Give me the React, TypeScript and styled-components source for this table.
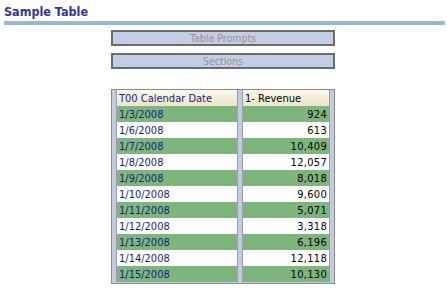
import React from "react";
import styled, { createGlobalStyle } from "styled-components";

const Global = createGlobalStyle`
  html, body { margin: 0; padding: 0; background: #ffffff; }
  body { font-family: "DejaVu Sans Condensed", "DejaVu Sans", sans-serif; font-size: 11px; }
`;

const Page = styled.div`
  width: 447px;
  height: 288px;
  overflow: hidden;
  display: flex;
  flex-direction: column;
  align-items: stretch;
`;

const Title = styled.div`
  margin: 4px 2px 0 4px;
  font-family: "DejaVu Sans Condensed", "DejaVu Sans", sans-serif;
  font-weight: bold;
  font-size: 12.5px;
  line-height: 16px;
  color: #333399;
  border-bottom: 4px solid #99b8d9;
  padding-bottom: 1px;
  height: 16px;
`;

const Center = styled.div`
  display: flex;
  flex-direction: column;
  align-items: flex-start;
  padding-left: 111px;
`;

const BarButton = styled.div<{ $top: number }>`
  margin-top: ${(p) => p.$top}px;
  width: 220px;
  height: 12px;
  border: 2px solid #6b6b6b;
  background: #c5cde6;
  color: #949494;
  font-size: 10.5px;
  line-height: 12px;
  text-align: center;
`;

const Frame = styled.table`
  margin-top: 20px;
  border: 1px solid #8a8a8a;
  background: #c3cbe3;
  border-collapse: separate;
  border-spacing: 4px 0;
  padding: 0 0 1px 0;
`;

const HeadCell = styled.th<{ $navy?: boolean; $w: number }>`
  width: ${(p) => p.$w}px;
  height: 16px;
  padding: 0 2px;
  text-align: left;
  font-weight: normal;
  font-size: 11px;
  color: ${(p) => (p.$navy ? "#1c1c80" : "#000000")};
  background: linear-gradient(#fbf8ec, #ece5c8);
  border-left: 1px solid #9aa0a8;
  border-right: 1px solid #9aa0a8;
  white-space: nowrap;
`;

const Cell = styled.td<{ $alt: boolean; $num?: boolean }>`
  height: 16px;
  padding: 0 2px;
  font-size: 11px;
  letter-spacing: ${(p) => (p.$num ? "0.3px" : "0")};
  text-align: ${(p) => (p.$num ? "right" : "left")};
  color: ${(p) => (p.$num ? "#000000" : "#1c1c80")};
  background: ${(p) => (p.$alt ? "#7db57c" : "#ffffff")};
  border-left: 1px solid #9aa0a8;
  border-right: 1px solid #9aa0a8;
  white-space: nowrap;
`;

const rows: [string, string][] = [
  ["1/3/2008", "924"],
  ["1/6/2008", "613"],
  ["1/7/2008", "10,409"],
  ["1/8/2008", "12,057"],
  ["1/9/2008", "8,018"],
  ["1/10/2008", "9,600"],
  ["1/11/2008", "5,071"],
  ["1/12/2008", "3,318"],
  ["1/13/2008", "6,196"],
  ["1/14/2008", "12,118"],
  ["1/15/2008", "10,130"],
];

export default function App() {
  return (
    <Page>
      <Global />
      <Title>Sample Table</Title>
      <Center>
        <BarButton $top={5}>Table Prompts</BarButton>
        <BarButton $top={7}>Sections</BarButton>
        <Frame>
          <thead>
            <tr>
              <HeadCell $navy $w={116}>T00 Calendar Date</HeadCell>
              <HeadCell $w={82}>1- Revenue</HeadCell>
            </tr>
          </thead>
          <tbody>
            {rows.map(([d, v], i) => (
              <tr key={d}>
                <Cell $alt={i % 2 === 0}>{d}</Cell>
                <Cell $alt={i % 2 === 0} $num>{v}</Cell>
              </tr>
            ))}
          </tbody>
        </Frame>
      </Center>
    </Page>
  );
}
